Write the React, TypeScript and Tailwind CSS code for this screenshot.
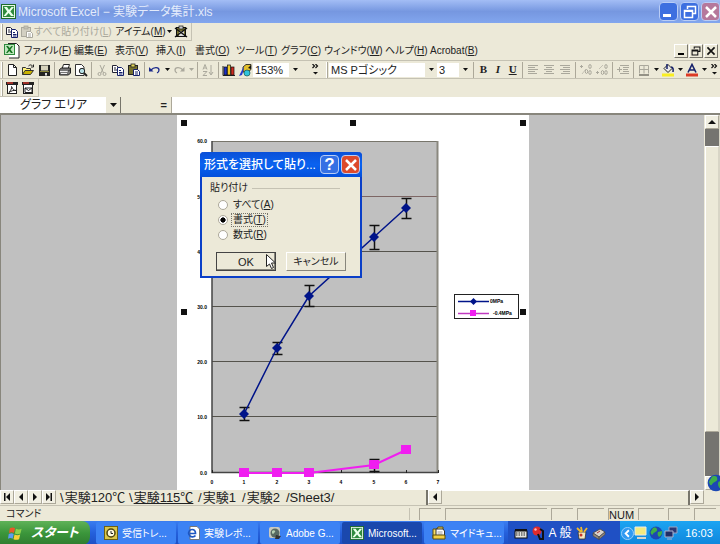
import React from 'react';

const FONT = "font-['Liberation_Sans','Noto_Sans_CJK_JP',sans-serif]";

type Kids = { children?: React.ReactNode };

/* ---------- shared pieces ---------- */

function Glyph({ children, size = 14, box = 14 }: Kids & { size?: number; box?: number }) {
  return (
    <svg width={size} height={size} viewBox={`0 0 ${box} ${box}`} className="shrink-0" aria-hidden="true">
      {children}
    </svg>
  );
}

function IconButton({ label, children }: Kids & { label: string }) {
  return (
    <button type="button" aria-label={label} className="flex h-4 w-4 shrink-0 items-center justify-center">
      {children}
    </button>
  );
}

function Caret({ faded = false }: { faded?: boolean }) {
  return (
    <button type="button" aria-label="その他" className="flex h-4 w-2 shrink-0 items-center justify-center">
      <svg width="5" height="3" viewBox="0 0 5 3" aria-hidden="true">
        <path d="M0 0h5L2.5 3z" fill={faded ? '#aaa89c' : '#111'} />
      </svg>
    </button>
  );
}

function Sep() {
  return <span className="mx-0.5 h-4 w-px shrink-0 bg-[#aca899]" />;
}

function Grip() {
  return <span className="mx-px h-4 w-0.5 shrink-0 border-r border-[#aca899] bg-white" />;
}

function More() {
  return (
    <button type="button" aria-label="ツールバーのオプション" className="flex h-4 w-3 shrink-0 items-center justify-center">
      <svg width="7" height="11" viewBox="0 0 7 11" aria-hidden="true">
        <path d="M.5 0l2 2-2 2M3.500 0l2 2-2 2" fill="none" stroke="#111" strokeWidth="1.200" />
        <path d="M1 8h5L3.500 10.500z" fill="#111" />
      </svg>
    </button>
  );
}

function Combo({ label, value, className }: { label: string; value: string; className: string }) {
  return (
    <div className={`relative flex h-[14px] shrink-0 items-center ${className}`}>
      <select aria-label={label} defaultValue={value} className="h-full w-full appearance-none bg-white pl-0.5 text-[11px] leading-[14px]">
        <option>{value}</option>
      </select>
      <span className="pointer-events-none absolute right-0 flex h-full w-3 items-center justify-center bg-[#ece9d8]">
        <svg width="5" height="3" viewBox="0 0 5 3" aria-hidden="true">
          <path d="M0 0h5L2.500 3z" fill="#111" />
        </svg>
      </span>
    </div>
  );
}

/* ---------- icons ---------- */

const ExcelIcon = ({ size = 15 }: { size?: number }) => (
  <Glyph size={size} box={15}>
    <rect x=".5" y=".5" width="14" height="14" fill="#e9f5e4" stroke="#1d6b2c" />
    <path d="M2 2h11v11H2z" fill="#2f8a3d" />
    <path d="M3 3h3l2 3 2.500-3H13L9.300 7.500 13 12h-3L7.600 9 5 12H2.500l3.700-4.500z" fill="#eaffea" />
  </Glyph>
);
const WorkbookIcon = () => (
  <Glyph size={16} box={16}>
    <path d="M4 .5h8.500L15 3v12H5" fill="#fff" stroke="#222" />
    <rect x=".5" y="1.500" width="10" height="10" fill="#bfe6bd" stroke="#2f8a3d" />
    <path d="M2 3h2l1.600 2L7.500 3H9L6.500 6.500 9 10H7L5.300 8 3.500 10H2l2.500-3.500z" fill="#15741f" />
  </Glyph>
);
const NewIcon = () => (
  <Glyph><path d="M3.500 1.500h5l3 3v8h-8z" fill="#fff" stroke="#222" /><path d="M8.500 1.500v3h3" fill="none" stroke="#222" /></Glyph>
);
const OpenIcon = () => (
  <Glyph>
    <path d="M1.500 11.500v-7h3l1 1h4v2" fill="#fff27a" stroke="#333" />
    <path d="M1.500 11.500l2.500-4h8.500l-3 4z" fill="#c9b100" stroke="#333" />
    <path d="M7.500 3c1.500-1.500 3-1.500 4 0M12.500 1.500v2.500h-2.500" fill="none" stroke="#222" />
  </Glyph>
);
const SaveIcon = () => (
  <Glyph>
    <rect x="2" y="2" width="11" height="11" fill="#222" />
    <rect x="4" y="2.500" width="7" height="5" fill="#d5d1bb" />
    <rect x="3" y="8" width="9" height="1" fill="#8a873a" />
    <rect x="8" y="10" width="2" height="2.500" fill="#ddd" />
  </Glyph>
);
const PrintIcon = () => (
  <Glyph>
    <path d="M4 6l1.500-4.500h6L10 6z" fill="#fff" stroke="#222" />
    <path d="M1.500 6.500l2-1.500h9v5l-2 2h-9z" fill="#777" stroke="#222" />
    <path d="M2 8.500h8M3 10.500h6" stroke="#eee" />
    <path d="M10 8.500l2-2" stroke="#222" />
  </Glyph>
);
const PreviewIcon = () => (
  <Glyph>
    <path d="M1.500 1.500h6l2.500 2.500v8.500h-8.500z" fill="#fff" stroke="#333" />
    <circle cx="8" cy="8" r="2.700" fill="#b6dfe5" stroke="#222" />
    <path d="M10 10l3 3" stroke="#222" strokeWidth="1.800" />
  </Glyph>
);
const CutIcon = () => (
  <Glyph>
    <path d="M5 2l3.500 8M9.500 2L6 10" stroke="#aaa89c" fill="none" />
    <circle cx="4.500" cy="11" r="1.500" fill="none" stroke="#aaa89c" /><circle cx="9.500" cy="11" r="1.500" fill="none" stroke="#aaa89c" />
  </Glyph>
);
const CopyIcon = () => (
  <Glyph>
    <path d="M1.500 2.500h4l2 2v5h-6z" fill="#fff" stroke="#223" />
    <path d="M3 5h2M3 7h3" stroke="#223" />
    <path d="M6.500 4.500h4l2 2v6h-6z" fill="#fff" stroke="#14206a" />
    <path d="M8 7.500h2M8 9.500h3.500M8 11h3.500" stroke="#14206a" />
  </Glyph>
);
const PasteIcon = ({ faded = false }: { faded?: boolean }) => (
  <Glyph>
    <rect x="1.500" y="2.500" width="9" height="9" fill={faded ? '#d3d0c2' : '#77722e'} stroke={faded ? '#aaa89c' : '#222'} />
    <rect x="4" y="1" width="4" height="3" fill={faded ? '#c4c1b4' : '#e3d75b'} stroke={faded ? '#aaa89c' : '#222'} strokeWidth=".8" />
    <path d="M6.500 6.500h4l2 2v4h-6z" fill="#fff" stroke={faded ? '#aaa89c' : '#14206a'} />
    <path d="M8 9h3M8 11h3" stroke={faded ? '#aaa89c' : '#14206a'} />
  </Glyph>
);
const ArcIcon = ({ redo = false }: { redo?: boolean }) => (
  <Glyph>
    {redo ? (
      <><path d="M11 7C8 3.500 3 4 3 7c0 1.500.8 2.500 2 3" fill="none" stroke="#aaa89c" strokeWidth="1.300" /><path d="M12.500 4v4.500H8z" fill="#aaa89c" /></>
    ) : (
      <><path d="M3 7c3-3.500 8-3 8 0 0 1.500-.8 2.500-2 3" fill="none" stroke="#1b2a8c" strokeWidth="1.300" /><path d="M1 4v4.500h4.500z" fill="#1b2a8c" /></>
    )}
  </Glyph>
);
const SortIcon = () => (
  <Glyph>
    <path d="M2 6.500L4 1.500l2 5M3 5h2M2 8.500h4L2 12.500h4M10 2v9M8 9l2 3 2-3" fill="none" stroke="#aaa89c" />
  </Glyph>
);
const ChartIcon = () => (
  <Glyph>
    <path d="M1 3v9.500h12" stroke="#222" fill="none" />
    <rect x="2" y="4" width="3" height="8" fill="#1c30c8" stroke="#111" strokeWidth=".7" />
    <rect x="5.500" y="2" width="3" height="10" fill="#f0c92a" stroke="#111" strokeWidth=".7" />
    <rect x="9" y="4" width="3" height="8" fill="#cf2a20" stroke="#111" strokeWidth=".7" />
  </Glyph>
);
const DrawIcon = () => (
  <Glyph>
    <path d="M5 4l3-2.500h5v5L10 9H5z" fill="#e2bf2b" stroke="#111" strokeWidth=".8" />
    <path d="M6 3l-5 10 3-1 1-3z" fill="#2438cf" />
    <circle cx="9" cy="10" r="3" fill="#2fc3dc" stroke="#155" strokeWidth=".7" />
    <path d="M10 5l3-3v4z" fill="#111" />
  </Glyph>
);
const AlignIcon = ({ d }: { d: string }) => <Glyph><path d={d} stroke="#aaa89c" fill="none" /></Glyph>;
const DecimalIcon = ({ less = false }: { less?: boolean }) => (
  <Glyph>
    <path d={less ? 'M1 9.500h3M2.500 8v3' : 'M1 3.500h3M2.500 2v3'} stroke="#aaa89c" fill="none" />
    <path d={less ? 'M4 6L8 2' : 'M3 11L7 6'} stroke="#c4c1b4" fill="none" />
    <ellipse cx="7.500" cy={less ? 9.5 : 8.5} rx="1.200" ry="2" fill="none" stroke="#aaa89c" />
    <ellipse cx="11" cy="3.500" rx="1.200" ry="2" fill="none" stroke="#aaa89c" />
    <ellipse cx="11" cy="9.500" rx="1.200" ry="2" fill="none" stroke="#aaa89c" />
  </Glyph>
);
const IndentIcon = () => <Glyph><path d="M4 2.500h9M7 4.500h6M7 6.500h5M7 8.500h6M4 10.500h9M1 6.500h5M3.500 4v5" stroke="#aaa89c" fill="none" /></Glyph>;
const BorderIcon = () => (
  <Glyph><path d="M2.500 2.500h9v8M2.500 2.500v8M7 2.500v8M2.500 6.500h9" fill="none" stroke="#aaa89c" /><path d="M2 12h10" stroke="#77756b" strokeWidth="1.500" /></Glyph>
);
const FillIcon = () => (
  <Glyph>
    <path d="M3 5.500l4-4 4 4-4 4z" fill="#e8e8e8" stroke="#222" /><path d="M6 1v5M10 4c2 0 2.500 2 2 5" stroke="#14206a" strokeWidth="1.500" fill="none" />
    <rect x="1" y="10.500" width="12" height="3" fill="#f9ee22" />
  </Glyph>
);
const FontColorIcon = () => (
  <Glyph><path d="M3 9.500L7 1.500l4 8M4.500 7h5" fill="none" stroke="#14206a" strokeWidth="1.600" /><rect x="1" y="10.500" width="12" height="3" fill="#dc3a26" /></Glyph>
);
const PdfIcon = ({ mail = false }: { mail?: boolean }) => (
  <Glyph>
    <rect x="2.500" y="2.500" width="9" height="10" fill="#fff" stroke="#222" />
    <rect x="1" y="1" width="12" height="3" fill="#222" />
    <path d="M2 2h6" stroke="#c8342a" strokeWidth="1.500" />
    <path d={mail ? 'M4 7h7v4.500H4zM4 7l3.500 2.500L11 7' : 'M4 11.500C6 9 7 7 6.500 5.500 8 8.500 9 9.500 11 9.500 8.500 9 6 10 4 11.500'} fill="none" stroke="#222" />
  </Glyph>
);
const ClearIcon = () => (
  <Glyph>
    <rect x="2.500" y="2.500" width="9" height="9" fill="#77722e" stroke="#111" /><rect x="5" y="1" width="4" height="3" fill="#ccc" stroke="#111" strokeWidth=".7" />
    <path d="M5 6h5v5H5z" fill="#ddd" />
    <path d="M1 3l12 9M13 3L1 12" stroke="#111" strokeWidth="1.500" />
  </Glyph>
);

/* ---------- window chrome ---------- */

function CaptionButton({ label, tone, children }: Kids & { label: string; tone: string }) {
  return (
    <button type="button" aria-label={label} className={`flex h-[19px] w-[19px] shrink-0 items-center justify-center rounded-sm border border-[#b9cdf6] ${tone}`}>
      {children}
    </button>
  );
}

function TitleBar() {
  return (
    <header className="flex h-[23px] items-center gap-0.5 bg-linear-to-b from-[#a3bdf5] via-[#7697e0] to-[#82a6ee] pl-px">
      <ExcelIcon />
      <h1 className="flex-1 text-[12px] text-[#e3ebfb]">Microsoft Excel − 実験データ集計.xls</h1>
      <CaptionButton label="最小化" tone="bg-[#3d6fe0]">
        <span className="mt-2 mr-1 h-[3px] w-2 bg-white" />
      </CaptionButton>
      <CaptionButton label="元に戻す" tone="bg-[#3d6fe0]">
        <Glyph><path d="M4.500 4V1.500h8v7H10" fill="none" stroke="#fff" strokeWidth="1.500" /><path d="M1.500 5.500h8v7h-8z" fill="none" stroke="#fff" strokeWidth="1.500" /><path d="M1 6.500h9" stroke="#fff" /></Glyph>
      </CaptionButton>
      <CaptionButton label="閉じる" tone="bg-[#b5789c]">
        <Glyph><path d="M2 2l10 10M12 2L2 12" stroke="#fff" strokeWidth="2.500" /></Glyph>
      </CaptionButton>
    </header>
  );
}

const MENUS = [
  { text: 'ファイル', key: 'F', w: 'w-[50px]' },
  { text: '編集', key: 'E', w: 'w-[41px]' },
  { text: '表示', key: 'V', w: 'w-[41px]' },
  { text: '挿入', key: 'I', w: 'w-[39px]' },
  { text: '書式', key: 'O', w: 'w-[41px]' },
  { text: 'ツール', key: 'T', w: 'w-[45px]' },
  { text: 'グラフ', key: 'C', w: 'w-[43px]' },
  { text: 'ウィンドウ', key: 'W', w: 'w-[61px]' },
  { text: 'ヘルプ', key: 'H', w: 'w-[45px]' },
  { text: 'Acrobat', key: 'B', w: 'w-[56px]' },
];

function Mnemonic({ text, k }: { text: string; k: string }) {
  return <>{text}(<u>{k}</u>)</>;
}

function SmallButton({ label, children }: Kids & { label: string }) {
  return (
    <button type="button" aria-label={label} className="flex h-[14px] w-[14px] items-center justify-center border border-t-white border-r-[#77756b] border-b-[#77756b] border-l-white">
      {children}
    </button>
  );
}

function MenuBar() {
  return (
    <nav className="flex h-5 items-center border-b border-[#c5c2b3] pl-1">
      <WorkbookIcon />
      <div className="ml-1 flex flex-1">
        {MENUS.map((m) => (
          <button key={m.key} type="button" className={`shrink-0 text-left text-[10px] whitespace-nowrap ${m.w}`}>
            <Mnemonic text={m.text} k={m.key} />
          </button>
        ))}
      </div>
      <div className="flex gap-px pr-0.5">
        <SmallButton label="ブックを最小化"><span className="mt-1.5 h-0.5 w-1.5 bg-black" /></SmallButton>
        <SmallButton label="ブックを元に戻す"><Glyph size={10}><path d="M4.500 4V1.500h8v6H10M1.500 5.500h8v7h-8zM1 7h9" fill="none" stroke="#111" strokeWidth="1.500" /></Glyph></SmallButton>
        <SmallButton label="ブックを閉じる"><Glyph size={10}><path d="M2 2l10 10M12 2L2 12" stroke="#111" strokeWidth="2.300" /></Glyph></SmallButton>
      </div>
    </nav>
  );
}

function Toolbars() {
  return (
    <>
      <div className="flex h-[18px] w-[192px] items-center border-r border-b border-[#c5c2b3]">
        <Grip />
        <IconButton label="コピー"><CopyIcon /></IconButton>
        <button type="button" disabled className="flex w-[95px] shrink-0 items-center text-[10px] whitespace-nowrap text-[#aaa89c]">
          <PasteIcon faded /><span><Mnemonic text="すべて貼り付け" k="L" /></span>
        </button>
        <button type="button" className="w-[50px] shrink-0 text-left text-[10px] whitespace-nowrap"><Mnemonic text="アイテム" k="M" /></button>
        <Caret />
        <IconButton label="クリップボードをクリア"><ClearIcon /></IconButton>
      </div>
      <MenuBar />
      <div className="flex h-[18px] items-center border-b border-[#c5c2b3]">
        <Grip />
        <IconButton label="新規作成"><NewIcon /></IconButton>
        <IconButton label="開く"><OpenIcon /></IconButton>
        <IconButton label="上書き保存"><SaveIcon /></IconButton>
        <Sep />
        <IconButton label="印刷"><PrintIcon /></IconButton>
        <IconButton label="印刷プレビュー"><PreviewIcon /></IconButton>
        <Sep />
        <IconButton label="切り取り"><CutIcon /></IconButton>
        <IconButton label="コピー"><CopyIcon /></IconButton>
        <IconButton label="貼り付け"><PasteIcon /></IconButton>
        <Sep />
        <IconButton label="元に戻す"><ArcIcon /></IconButton>
        <Caret />
        <IconButton label="やり直し"><ArcIcon redo /></IconButton>
        <Caret faded />
        <Sep />
        <IconButton label="並べ替え"><SortIcon /></IconButton>
        <Sep />
        <IconButton label="グラフ ウィザード"><ChartIcon /></IconButton>
        <IconButton label="図形描画"><DrawIcon /></IconButton>
        <Combo label="ズーム" value="153%" className="w-12" />
        <div className="mr-1 ml-2"><More /></div>
        <Grip />
        <Combo label="フォント" value="MS Pゴシック" className="w-[108px]" />
        <Combo label="フォント サイズ" value="3" className="w-[34px]" />
        <Sep />
        <button type="button" className="w-4 font-['Liberation_Serif',serif] text-[11px] font-bold">B</button>
        <button type="button" className="w-4 font-['Liberation_Serif',serif] text-[11px] font-bold italic">I</button>
        <button type="button" className="w-4 font-['Liberation_Serif',serif] text-[11px] font-bold underline">U</button>
        <Sep />
        <IconButton label="左揃え"><AlignIcon d="M2 2.500h10M2 4.500h7M2 6.500h10M2 8.500h7M2 10.500h9" /></IconButton>
        <IconButton label="中央揃え"><AlignIcon d="M2 2.500h10M4 4.500h6M2 6.500h10M4 8.500h6M2 10.500h10" /></IconButton>
        <IconButton label="右揃え"><AlignIcon d="M2 2.500h10M5 4.500h7M2 6.500h10M5 8.500h7M3 10.500h9" /></IconButton>
        <Sep />
        <IconButton label="小数点表示桁上げ"><DecimalIcon /></IconButton>
        <IconButton label="小数点表示桁下げ"><DecimalIcon less /></IconButton>
        <Sep />
        <IconButton label="インデント"><IndentIcon /></IconButton>
        <Sep />
        <IconButton label="罫線"><BorderIcon /></IconButton>
        <Caret />
        <IconButton label="塗りつぶしの色"><FillIcon /></IconButton>
        <Caret />
        <IconButton label="フォントの色"><FontColorIcon /></IconButton>
        <Caret />
        <More />
      </div>
      <div className="flex h-[18px] w-[39px] items-center border-r border-b border-[#c5c2b3]">
        <Grip />
        <IconButton label="PDF に変換"><PdfIcon /></IconButton>
        <IconButton label="PDF に変換して送信"><PdfIcon mail /></IconButton>
      </div>
    </>
  );
}

function FormulaBar() {
  return (
    <div className="flex h-[18px] border-b-2 border-[#88867c]">
      <div className="relative flex h-4 w-[121px] border-r border-[#77756b]">
        <select aria-label="名前ボックス" defaultValue="グラフ エリア" className="h-4 w-full appearance-none bg-white pl-5 text-[12px] leading-4">
          <option>グラフ エリア</option>
        </select>
        <span className="pointer-events-none absolute top-0 right-0 flex h-full w-[14px] items-center justify-center bg-[#ece9d8]">
          <svg width="7" height="4" viewBox="0 0 7 4" aria-hidden="true"><path d="M0 0h7L3.500 4z" fill="#111" /></svg>
        </span>
      </div>
      <label htmlFor="formula" className="w-[51px] border-r border-[#aca899] pr-1 text-right text-[11px] leading-4 font-bold">=</label>
      <input id="formula" className="min-w-0 flex-1 bg-white outline-none" />
    </div>
  );
}

/* ---------- chart ---------- */

const px = (v: number) => Math.round(35 + v * 32.3);
const py = (v: number) => Math.round(357.5 - v * 5.52);

const SERIES_A = [
  { x: 1, y: 10.6, lo: 9.6, hi: 11.8 },
  { x: 2, y: 22.6, lo: 21.5, hi: 23.7 },
  { x: 3, y: 32, lo: 30.1, hi: 33.9 },
  { x: 5, y: 42.6, lo: 40.4, hi: 44.9 },
  { x: 6, y: 47.9, lo: 46.1, hi: 49.8 },
];
const SERIES_B = [
  { x: 1, y: 0 }, { x: 2, y: 0 }, { x: 3, y: 0 }, { x: 5, y: 1.3 }, { x: 6, y: 4 },
];
const HANDLES = [[4, 5], [173, 5], [343, 5], [4, 194], [343, 194]];

function ErrorBar({ x, lo, hi }: { x: number; lo: number; hi: number }) {
  const c = px(x) + 0.5;
  return <path d={`M${c - 5} ${py(hi) + 0.5}h10M${c - 5} ${py(lo) + 0.5}h10M${c} ${py(hi)}V${py(lo)}`} stroke="#111" strokeWidth="1.500" />;
}

function Chart() {
  return (
    <svg width="352" height="375" viewBox="0 0 352 375" className="block shrink-0 bg-white font-['Liberation_Sans',sans-serif]" role="img" aria-label="実験データのグラフ">
      <rect x="35" y="26" width="226" height="331" fill="#c0c0c0" />
      {[10, 20, 30, 40, 50].map((v) => (
        <path key={v} d={`M35 ${py(v) - 0.5}h226`} stroke={v === 50 ? '#7d6664' : '#55534c'} />
      ))}
      <path d="M35 26.500h226" stroke="#77756b" />
      <path d="M260.500 26v332" stroke="#8a887f" strokeWidth="2" />
      <path d="M35 26v331.500h226" fill="none" stroke="#444" strokeWidth="1.500" />
      {[0, 10, 20, 30, 40, 50, 60].map((v) => (
        <text key={v} x="30" y={py(v) + 2} textAnchor="end" fontSize="5" fontWeight="700">{v.toFixed(1)}</text>
      ))}
      {[0, 1, 2, 3, 4, 5, 6, 7].map((v) => (
        <g key={v}>
          <path d={`M${px(v) + 0.5} 355v3`} stroke="#222" />
          <text x={px(v)} y="369" textAnchor="middle" fontSize="5" fontWeight="700">{v}</text>
        </g>
      ))}
      {SERIES_A.map((p) => <ErrorBar key={p.x} {...p} />)}
      <ErrorBar x={5} lo={0.3} hi={2.4} />
      <polyline points={SERIES_A.map((p) => `${px(p.x)},${py(p.y)}`).join(' ')} fill="none" stroke="#001489" strokeWidth="1.500" />
      {SERIES_A.map((p) => (
        <path key={p.x} d={`M${px(p.x)} ${py(p.y) - 5}l5 5-5 5-5-5z`} fill="#001489" />
      ))}
      <polyline points={SERIES_B.map((p) => `${px(p.x)},${py(p.y)}`).join(' ')} fill="none" stroke="#f01ef0" strokeWidth="2" />
      {SERIES_B.map((p) => (
        <rect key={p.x} x={px(p.x) - 5} y={py(p.y) - 5} width="10" height="9" fill="#f01ef0" />
      ))}
      <rect x="277.500" y="179.500" width="64" height="24" fill="#fff" stroke="#222" />
      <path d="M281 186.500h31" stroke="#001489" strokeWidth="1.500" />
      <path d="M296.500 183l3.500 3.500-3.500 3.500-3.500-3.500z" fill="#001489" />
      <path d="M281 198.500h31" stroke="#c03ac0" strokeWidth="1.500" />
      <rect x="293" y="195" width="6" height="6" fill="#f01ef0" />
      <text x="313" y="188" fontSize="5" fontWeight="700">0MPa</text>
      <text x="316" y="200" fontSize="5" fontWeight="700">-0.4MPa</text>
      {HANDLES.map(([x, y]) => <rect key={`${x}-${y}`} x={x} y={y} width="6" height="6" fill="#111" />)}
    </svg>
  );
}

function ScrollArrow({ d, label }: { d: string; label: string }) {
  return (
    <button type="button" aria-label={label} className="flex h-[14px] w-[14px] shrink-0 items-center justify-center border border-t-white border-r-[#aca899] border-b-[#aca899] border-l-white bg-[#f1efe2]">
      <svg width="8" height="8" viewBox="0 0 8 8" aria-hidden="true"><path d={d} fill="#111" /></svg>
    </button>
  );
}

function GlobeIcon({ size }: { size: number }) {
  return (
    <Glyph size={size}>
      <circle cx="7" cy="7" r="6.500" fill="#1c48b4" />
      <path d="M4 2c3-1 4 0 4 2S5 6 4 8 2 8 1.500 6zM9 6l4-1c.5 3-1 5-3 6-1-1-2-3-1-5z" fill="#3fae48" />
    </Glyph>
  );
}

function Workspace() {
  return (
    <main className="flex flex-1 bg-[#c0c0c0]">
      <div className="w-[177px] shrink-0 border-l border-[#88867c]" />
      <Chart />
      <div className="flex-1" />
      <div className="relative flex w-4 shrink-0 flex-col border-r border-[#d8d5c6] bg-[#ece9d8] pl-px">
        <ScrollArrow label="上へ" d="M0 6h8L4 2z" />
        <span className="h-[17px] bg-[#757470]" />
        <span className="flex-1 border border-t-white border-r-[#d8d5c6] border-b-[#aca899] border-l-white" />
        <span className="h-11 bg-[#757470]" />
        <ScrollArrow label="下へ" d="M0 2h8L4 6z" />
        <div className="absolute right-[-6px] bottom-[-2px]"><GlobeIcon size={18} /></div>
      </div>
    </main>
  );
}

/* ---------- sheet tabs and status ---------- */

const TAB_NAV = [
  { label: '最初のシート', d: 'M1 0h1.500v8H1zM7 0v8L3 4z' },
  { label: '前のシート', d: 'M6 0v8L2 4z' },
  { label: '次のシート', d: 'M2 0v8l4-4z' },
  { label: '最後のシート', d: 'M1 0v8l4-4zM5.500 0H7v8H5.500z' },
];

const TABS = [
  { name: '実験120℃', edge: '\\', w: 'w-[69px]' },
  { name: '実験115℃', edge: '\\', w: 'w-[69px]' },
  { name: '実験1', edge: '/', w: 'w-[44px]' },
  { name: '実験2', edge: '/', w: 'w-[44px]' },
];

function SheetTabs() {
  return (
    <div className="flex h-[15px]">
      <div className="flex w-[60px]">
        {TAB_NAV.map((n) => <ScrollArrow key={n.label} label={n.label} d={n.d} />)}
      </div>
      <div className="flex w-[366px] text-[13px] leading-[15px] whitespace-nowrap">
        {TABS.map((t) => (
          <button key={t.name} type="button" className={`flex shrink-0 gap-px ${t.w}`}>
            <span>{t.edge}</span>
            <span className={t.name === '実験115℃' ? 'underline' : ''}>{t.name}</span>
          </button>
        ))}
        <button type="button">/Sheet3/</button>
      </div>
      <div className="flex flex-1 border-l-2 border-[#77756b]">
        <ScrollArrow label="左へ" d="M6 0v8L2 4z" />
        <span className="flex-1 border-t border-r-2 border-t-white border-r-[#77756b]" />
        <ScrollArrow label="右へ" d="M2 0v8l4-4z" />
      </div>
      <span className="w-4" />
    </div>
  );
}

function StatusCell({ w, children }: Kids & { w: string }) {
  return <span className={`h-3 shrink-0 border-t border-l border-[#aca899] text-center text-[11px] leading-3 ${w}`}>{children}</span>;
}

function StatusBar() {
  return (
    <footer className="flex h-4 items-center gap-1 border-t border-[#c5c2b3] pr-1">
      <span className="flex-1 border-r border-[#c5c2b3] pl-1.5 text-[10px] leading-3">コマンド</span>
      <span className="w-px" />
      <StatusCell w="w-[22px]" />
      <StatusCell w="w-[102px]" />
      <StatusCell w="w-[22px]" />
      <StatusCell w="w-[27px]" />
      <StatusCell w="w-[26px]">NUM</StatusCell>
      <StatusCell w="w-[26px]" />
      <StatusCell w="w-[22px]" />
      <StatusCell w="w-[22px]" />
    </footer>
  );
}

/* ---------- taskbar ---------- */

const ClockMailIcon = () => (
  <Glyph><rect x=".5" y=".5" width="13" height="13" fill="#d9c64a" stroke="#6d6114" /><circle cx="7" cy="7" r="4" fill="#fffbe0" stroke="#4d440c" strokeWidth="1.500" /><path d="M7 5v2.500h2" stroke="#222" fill="none" /></Glyph>
);
const IeDocIcon = () => (
  <Glyph><path d="M4 .5h7L13.500 3v10.500H4z" fill="#fff" stroke="#777" /><path d="M9.500 9.500C8 11.500 4 11.500 3 8.500s1-5 3-5 3.500 1.500 3.500 4H4" fill="none" stroke="#1c56c2" strokeWidth="1.700" /></Glyph>
);
const GlobeAppIcon = () => (
  <Glyph><rect x="1" y="1" width="11" height="11" rx="2" fill="#c9c9c0" /><circle cx="7" cy="7" r="4.500" fill="#586a62" /><path d="M4 5c2-2 4 0 3 1s-2 3-3 1z" fill="#b6d0b1" /><path d="M8 9l5 1-2 3H7z" fill="#333" /></Glyph>
);
const FolderIcon = () => (
  <Glyph><path d="M1 3h4l1-2h5v11H1z" fill="#f6dd62" stroke="#5d4e0d" /><path d="M4 3h7l1.500 2v7H4z" fill="#fff" stroke="#333" /><path d="M5.500 6h5M5.500 8h5" stroke="#999" /><path d="M1 9h12v4H1z" fill="#f1cf45" stroke="#5d4e0d" /></Glyph>
);

const TASKS = [
  { text: '受信トレ...', icon: <ClockMailIcon />, active: false },
  { text: '実験レポ...', icon: <IeDocIcon />, active: false },
  { text: 'Adobe G...', icon: <GlobeAppIcon />, active: false },
  { text: 'Microsoft...', icon: <ExcelIcon size={14} />, active: true },
  { text: 'マイドキュ...', icon: <FolderIcon />, active: false },
];

function Taskbar() {
  return (
    <div className="flex h-6 items-center bg-linear-to-b from-[#3b7df0] via-[#2460dc] to-[#1d4fc4] text-white">
      <button type="button" className="mr-1.5 flex h-6 w-[90px] items-center gap-2 rounded-r-lg bg-linear-to-b from-[#5fb258] via-[#3b963b] to-[#2f7c30] pl-2 text-[13px] font-bold whitespace-nowrap italic">
        <Glyph size={15} box={16}>
          <path d="M2 2.500c2-1.300 4-1.300 5.500 0L6.300 7.500C5 6.500 3 6.500 1 7.500z" fill="#e8572a" />
          <path d="M8.500 3c2 1 4 1 6 0l-1.200 5c-2 1-4 1-6 0z" fill="#8ed04a" />
          <path d="M.8 8.500c2-1 4-1 5.300 0L5 13.500c-1.500-1-3.500-1-5 0z" fill="#5c9cf0" />
          <path d="M7 9c2 1 4 1 6 0l-1.200 5c-2 1-4 1-6 0z" fill="#f7cf38" />
        </Glyph>
        スタート
      </button>
      <div className="flex flex-1 gap-0.5">
        {TASKS.map((t) => (
          <button key={t.text} type="button" className={`flex h-[22px] w-[80px] shrink-0 items-center gap-1 rounded-xs pl-2 text-[10px] whitespace-nowrap ${t.active ? 'bg-[#1a48ad]' : 'bg-[#3c82f4]'}`}>
            {t.icon}
            <span className="overflow-hidden">{t.text}</span>
          </button>
        ))}
      </div>
      <div className="flex h-full w-[112px] items-center justify-between bg-[#1f50c4] pr-3.5 pl-1.5 text-[12px]">
        <Glyph><rect x="1" y="5" width="12" height="7" fill="#e6e6e0" stroke="#111" /><path d="M2 7h10M2 9h10" stroke="#222" strokeDasharray="1.500 1" /><path d="M1 4h12" stroke="#111" strokeWidth="2" /></Glyph>
        <Glyph><circle cx="6" cy="5" r="4.500" fill="#df2a2c" /><path d="M7 8l2 5h3V5l-3-2" fill="none" stroke="#111" strokeWidth="2" /><circle cx="4.500" cy="3.500" r="1.200" fill="#fbb" /></Glyph>
        <span>A</span>
        <span>般</span>
        <Glyph><path d="M3 6h8l-1 7H4z" fill="#f3e6c0" stroke="#333" strokeWidth=".8" /><path d="M2 2l4 4M6 1l1 5M12 2L9 6" stroke="#f0b82c" strokeWidth="1.800" /><circle cx="6" cy="9" r="1.500" fill="#c8342a" /></Glyph>
        <Glyph><path d="M1 7l7-4 5 3-6 5z" fill="#d9d3cc" stroke="#444" strokeWidth=".8" /><path d="M1 7v3l6 3.500V11zM7 11v2.500l6-5V6z" fill="#94887c" stroke="#444" strokeWidth=".6" /><path d="M5 7l3-2" stroke="#a33" /></Glyph>
      </div>
      <div className="flex h-full w-[100px] items-center bg-linear-to-b from-[#1ca4f2] to-[#0f86dc]">
        <button type="button" aria-label="隠れているインジケータを表示" className="flex w-[14px] items-center justify-center">
          <Glyph size={13}><circle cx="7" cy="7" r="6.500" fill="#2f9af2" stroke="#9fd1fb" /><path d="M8.500 3.500L5 7l3.500 3.500" fill="none" stroke="#fff" strokeWidth="2" /></Glyph>
        </button>
        <div className="flex gap-px">
          <Glyph><path d="M1 1h11v8H1z" fill="#f3ea80" stroke="#e9e9e9" /><path d="M3 11h9v2H3z" fill="#d5d5cc" /></Glyph>
          <GlobeIcon size={14} />
          <Glyph><path d="M5 1h8v6H5z" fill="#2a3875" stroke="#9aa4c4" /><path d="M1 5h8v6H1z" fill="#1f2c66" stroke="#aab3cf" /><path d="M3 13h5" stroke="#aab3cf" /></Glyph>
        </div>
        <time className="flex-1 text-center text-[11px]">16:03</time>
      </div>
    </div>
  );
}

/* ---------- dialog ---------- */

const CHOICES = [
  { id: 'all', text: 'すべて', k: 'A' },
  { id: 'format', text: '書式', k: 'T' },
  { id: 'formula-only', text: '数式', k: 'R' },
];

function PasteDialog() {
  return (
    <section role="dialog" aria-labelledby="dlg-title" className="absolute top-[152px] left-[200px] w-[162px] rounded-t-sm border-2 border-t-0 border-[#0a3fc8] bg-[#ece9d8]">
      <div className="-mx-0.5 flex h-[25px] items-center gap-0.5 rounded-t-sm bg-linear-to-b from-[#0a50d8] via-[#0a62f0] to-[#0350dc] pr-0.5 pl-1">
        <h2 id="dlg-title" className="flex-1 text-[12px] font-medium whitespace-nowrap text-white">形式を選択して貼り...</h2>
        <CaptionButton label="ヘルプ" tone="bg-[#3470e4]"><span className="text-[17px] leading-4 font-bold text-white">?</span></CaptionButton>
        <CaptionButton label="閉じる" tone="bg-[#dd4a2c]"><Glyph><path d="M2 2l10 10M12 2L2 12" stroke="#fff" strokeWidth="2.500" /></Glyph></CaptionButton>
      </div>
      <form className="px-2 pt-1 pb-[5px]" onSubmit={(e) => e.preventDefault()}>
        <fieldset>
          <legend className="flex w-full items-center gap-1 text-[10px] leading-[14px]">
            貼り付け<span className="mr-3 h-px flex-1 bg-[#c5c2b3]" />
          </legend>
          <div className="flex flex-col pt-0.5 pl-2">
            {CHOICES.map((c) => (
              <div key={c.id} className="flex h-[15px] items-center gap-1">
                <input
                  id={c.id}
                  type="radio"
                  name="paste"
                  defaultChecked={c.id === 'format'}
                  className="h-[10px] w-[10px] appearance-none rounded-full border border-[#aca899] bg-white checked:bg-radial checked:from-black checked:from-40% checked:to-white checked:to-50%"
                />
                <label htmlFor={c.id} className={`px-px text-[10px] leading-3 ${c.id === 'format' ? 'outline-1 outline-[#77756b] outline-dotted' : ''}`}>
                  <Mnemonic text={c.text} k={c.k} />
                </label>
              </div>
            ))}
          </div>
        </fieldset>
        <div className="mt-[10px] flex gap-[10px] pl-1.5">
          <button type="submit" className="h-[19px] w-[60px] border border-[#444] text-[11px] leading-4 shadow-[inset_-1px_-1px_0_#88867c]">OK</button>
          <button type="button" className="h-[19px] w-[60px] border border-t-white border-r-[#88867c] border-b-[#88867c] border-l-white text-[10px] leading-4">キャンセル</button>
        </div>
      </form>
      <svg width="10" height="16" viewBox="0 0 10 16" className="absolute top-[102px] left-[64px]" aria-hidden="true">
        <path d="M.5.5v12l3-2.500 2 4.500 2-1-2-4.500h4z" fill="#fff" stroke="#222" />
      </svg>
    </section>
  );
}

export default function App() {
  return (
    <div lang="ja" className={`relative flex min-h-screen flex-col overflow-hidden bg-[#ece9d8] text-[#222] [font-feature-settings:'palt'] ${FONT}`}>
      <TitleBar />
      <Toolbars />
      <FormulaBar />
      <Workspace />
      <SheetTabs />
      <StatusBar />
      <Taskbar />
      <PasteDialog />
    </div>
  );
}
